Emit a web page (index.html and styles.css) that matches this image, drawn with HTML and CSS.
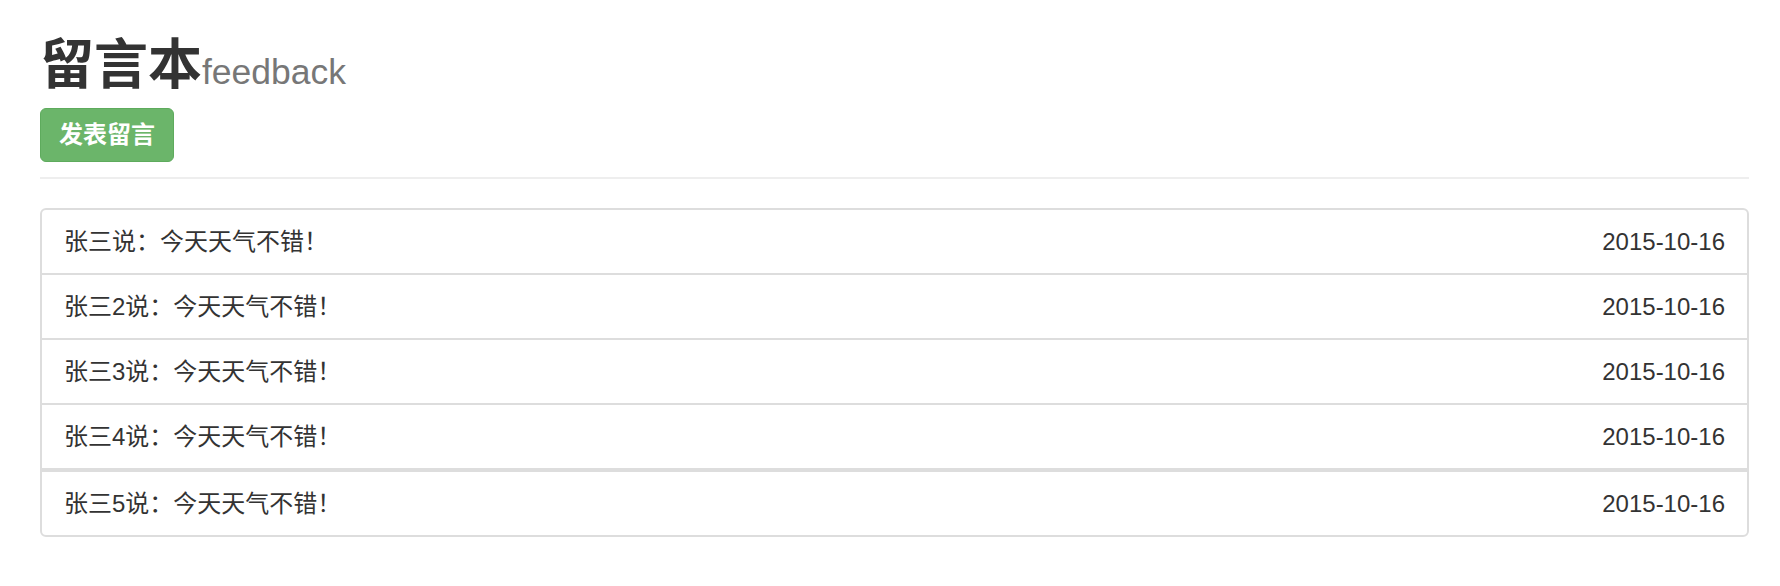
FILE: index.html
```html
<!DOCTYPE html>
<html lang="zh-CN">
<head>
<meta charset="utf-8">
<title>留言本</title>
<link rel="stylesheet" href="styles.css">
</head>
<body>
<div class="container">
  <div class="page-header">
    <h1 class="title">留言本<small class="subtitle">feedback</small></h1>
    <button class="btn-success" type="button">发表留言</button>
  </div>
  <ul class="list-group">
    <li class="list-item"><span class="msg">张三说：今天天气不错！</span><span class="date">2015-10-16</span></li>
    <li class="list-item"><span class="msg">张三2说：今天天气不错！</span><span class="date">2015-10-16</span></li>
    <li class="list-item"><span class="msg">张三3说：今天天气不错！</span><span class="date">2015-10-16</span></li>
    <li class="list-item"><span class="msg">张三4说：今天天气不错！</span><span class="date">2015-10-16</span></li>
    <li class="list-item list-item-thick"><span class="msg">张三5说：今天天气不错！</span><span class="date">2015-10-16</span></li>
  </ul>
</div>
</body>
</html>
```
FILE: styles.css
```css
html, body {
  margin: 0;
  padding: 0;
  background: #fff;
}
body {
  font-family: "Liberation Sans", "Noto Sans CJK SC", sans-serif;
  color: #333;
  font-size: 24px;
}
.container {
  padding: 0 31px 0 40px;
}
.page-header {
  border-bottom: 2px solid #eee;
  padding-bottom: 15px;
  margin-bottom: 29px;
}
.title {
  margin: 37px 0 7px;
  font-size: 54px;
  line-height: 57px;
  font-weight: bold;
  color: #333;
  font-family: "Liberation Sans", "Noto Sans CJK SC", sans-serif;
}
.subtitle {
  font-size: 35.5px;
  font-weight: normal;
  color: #777;
}
.btn-success {
  display: block;
  font-family: "Liberation Sans", "Noto Sans CJK SC", sans-serif;
  font-size: 24px;
  font-weight: bold;
  line-height: 34px;
  height: 54px;
  padding: 9px 18px;
  color: #fff;
  background: #6bb56a;
  border: 1px solid #5eab5d;
  border-radius: 6px;
  margin: 0;
}
.list-group {
  list-style: none;
  margin: 0;
  padding: 0;
  border: 2px solid #ddd;
  border-radius: 6px;
}
.list-item {
  display: flex;
  justify-content: space-between;
  align-items: center;
  padding: 15px 22px 15px 22px;
  line-height: 33px;
  border-top: 2px solid #ddd;
}
.list-item:first-child {
  border-top: 0;
}
.list-item-thick {
  border-top-width: 4px;
}
```
